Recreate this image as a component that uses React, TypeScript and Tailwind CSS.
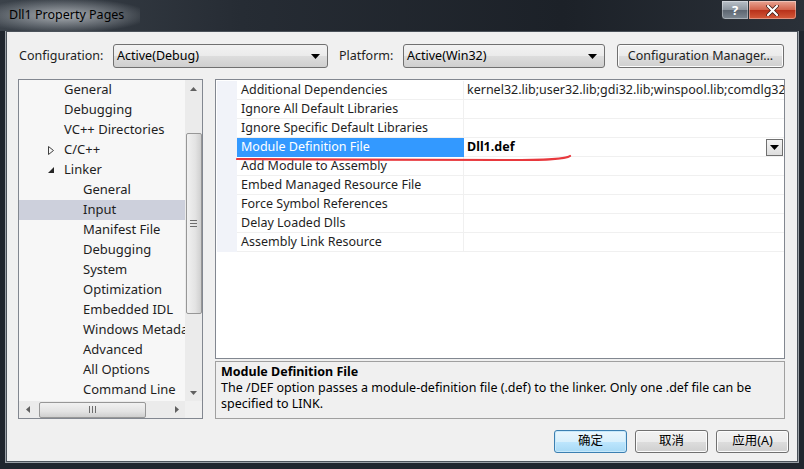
import React from 'react';

type TreeItem = { label: string; level: 1 | 2; expander?: 'open' | 'closed'; selected?: boolean };

const treeItems: TreeItem[] = [
  { label: 'General', level: 1 },
  { label: 'Debugging', level: 1 },
  { label: 'VC++ Directories', level: 1 },
  { label: 'C/C++', level: 1, expander: 'closed' },
  { label: 'Linker', level: 1, expander: 'open' },
  { label: 'General', level: 2 },
  { label: 'Input', level: 2, selected: true },
  { label: 'Manifest File', level: 2 },
  { label: 'Debugging', level: 2 },
  { label: 'System', level: 2 },
  { label: 'Optimization', level: 2 },
  { label: 'Embedded IDL', level: 2 },
  { label: 'Windows Metadata', level: 2 },
  { label: 'Advanced', level: 2 },
  { label: 'All Options', level: 2 },
  { label: 'Command Line', level: 2 },
];

const props: [string, string][] = [
  ['Additional Dependencies', 'kernel32.lib;user32.lib;gdi32.lib;winspool.lib;comdlg32.lib;advapi32.lib;shell32.lib'],
  ['Ignore All Default Libraries', ''],
  ['Ignore Specific Default Libraries', ''],
  ['Module Definition File', 'Dll1.def'],
  ['Add Module to Assembly', ''],
  ['Embed Managed Resource File', ''],
  ['Force Symbol References', ''],
  ['Delay Loaded Dlls', ''],
  ['Assembly Link Resource', ''],
];

function DownArrow() {
  return (
    <svg width="9" height="5" viewBox="0 0 9 5">
      <path d="M0 0 H9 L4.5 5 Z" fill="#000" />
    </svg>
  );
}

function Combo({ value, width }: { value: string; width: string }) {
  return (
    <div
      className={`${width} h-[24px] flex items-center justify-between pl-[3px] pr-[7px] rounded-[3px] border border-[#707070] bg-[linear-gradient(#f2f2f2,#ebebeb_50%,#dddddd_51%,#cfcfcf)] text-black`}
    >
      <span>{value}</span>
      <DownArrow />
    </div>
  );
}

function ScrollArrow({ dir }: { dir: 'up' | 'down' | 'left' | 'right' }) {
  const d = {
    up: 'M0 4 L3.5 0 L7 4 Z',
    down: 'M0 0 H7 L3.5 4 Z',
    left: 'M4 0 V7 L0 3.5 Z',
    right: 'M0 0 V7 L4 3.5 Z',
  }[dir];
  const vertical = dir === 'up' || dir === 'down';
  return (
    <svg width={vertical ? 7 : 4} height={vertical ? 4 : 7} viewBox={vertical ? '0 0 7 4' : '0 0 4 7'}>
      <path d={d} fill="#606060" />
    </svg>
  );
}

function Tree() {
  return (
    <div className="w-[185px] h-[340px] border border-[#828790] bg-[#f7f7f7] flex flex-col">
      <div className="flex h-[321px]">
        <div className="flex-1 overflow-hidden">
          {treeItems.map((item, i) => (
            <div
              key={i}
              className={`h-[20px] flex items-center whitespace-nowrap text-[13px] text-[#1e1e1e] ${
                item.selected ? 'bg-[#cdd0dc]' : ''
              } ${item.level === 1 ? 'pl-[29px]' : 'pl-[64px]'}`}
            >
              {item.level === 1 && (
                <span className="w-[10px] mr-[6px] flex items-center">
                  {item.expander === 'closed' && (
                    <svg width="6" height="9" viewBox="0 0 6 9">
                      <path d="M0.5 0.5 L5.5 4.5 L0.5 8.5 Z" fill="none" stroke="#404040" strokeWidth="1" />
                    </svg>
                  )}
                  {item.expander === 'open' && (
                    <svg width="6" height="6" viewBox="0 0 6 6">
                      <path d="M6 0 V6 H0 Z" fill="#262626" />
                    </svg>
                  )}
                </span>
              )}
              <span>{item.label}</span>
            </div>
          ))}
        </div>
        <div className="w-[17px] bg-[#ebebeb] flex flex-col items-center">
          <div className="h-[17px] flex items-center justify-center">
            <ScrollArrow dir="up" />
          </div>
          <div className="mt-[36px] w-[16px] h-[181px] rounded-[2px] border border-[#979797] bg-[linear-gradient(90deg,#f1f1f1,#e3e3e3_60%,#cfcfcf)] flex flex-col items-center justify-center gap-[2px]">
            <div className="w-[7px] h-[1px] bg-[#6d6d6d]" />
            <div className="w-[7px] h-[1px] bg-[#6d6d6d]" />
            <div className="w-[7px] h-[1px] bg-[#6d6d6d]" />
          </div>
          <div className="flex-1" />
          <div className="h-[17px] flex items-center justify-center">
            <ScrollArrow dir="down" />
          </div>
        </div>
      </div>
      <div className="flex h-[17px]">
        <div className="flex-1 bg-[#ebebeb] flex items-center">
          <div className="w-[17px] flex justify-center">
            <ScrollArrow dir="left" />
          </div>
          <div className="ml-[3px] w-[107px] h-[16px] rounded-[2px] border border-[#979797] bg-[linear-gradient(#f1f1f1,#e3e3e3_60%,#cfcfcf)] flex items-center justify-center gap-[2px]">
            <div className="w-[1px] h-[7px] bg-[#6d6d6d]" />
            <div className="w-[1px] h-[7px] bg-[#6d6d6d]" />
            <div className="w-[1px] h-[7px] bg-[#6d6d6d]" />
          </div>
          <div className="flex-1" />
          <div className="w-[17px] flex justify-center">
            <ScrollArrow dir="right" />
          </div>
        </div>
        <div className="w-[17px] bg-[#f0f0f0]" />
      </div>
    </div>
  );
}

function PropertyGrid() {
  return (
    <div className="relative w-[570px] h-[280px] border border-[#828790] bg-white pl-[1px] pt-[1px]">
      {props.map(([name, value], i) => {
        const selected = i === 3;
        return (
          <div key={i} className="flex h-[19px] text-[12.5px]">
            <div className="w-[20px] bg-[#f1f3f9]" />
            <div
              className={`w-[227px] flex items-center pl-[4px] border-b border-r whitespace-nowrap ${
                selected ? 'bg-[#3399ff] text-white border-[#3399ff]' : 'text-[#1e1e1e] border-[#f0f0f0]'
              }`}
            >
              {name}
            </div>
            <div className="flex-1 flex items-center pl-[3px] border-b border-[#f0f0f0] overflow-hidden whitespace-nowrap text-[#1e1e1e]">
              {selected ? (
                <>
                  <span className="flex-1 font-bold text-black">{value}</span>
                  <span className="w-[17px] h-[17px] mr-[1px] border border-[#707070] bg-[linear-gradient(#f4f4f4,#dedede)] flex items-center justify-center">
                    <DownArrow />
                  </span>
                </>
              ) : (
                value
              )}
            </div>
          </div>
        );
      })}
      <svg className="absolute left-[20px] top-[74px]" width="336" height="10" viewBox="0 0 336 10">
        <path
          d="M1 5 C80 5.5 200 6 268 6 C306 6 330 5.5 334 2"
          fill="none"
          stroke="#e8383d"
          strokeWidth="2.2"
          strokeLinecap="round"
        />
      </svg>
    </div>
  );
}

function DialogButton({ label, primary, width }: { label: string; primary?: boolean; width: string }) {
  return (
    <div
      className={`${width} h-[23px] flex items-center justify-center rounded-[3px] border text-black ${
        primary
          ? 'border-[#3c7fb1] bg-[linear-gradient(#eaf6fd,#d9f0fc_50%,#bee6fd_51%,#a7d9f5)] shadow-[inset_0_0_0_1px_#c8e9fb]'
          : 'border-[#707070] bg-[linear-gradient(#f2f2f2,#ebebeb_50%,#dddddd_51%,#cfcfcf)] shadow-[inset_0_0_0_1px_#fcfcfc]'
      }`}
    >
      {label}
    </div>
  );
}

export default function App() {
  return (
    <div className="w-[804px] h-[469px] overflow-hidden bg-[#20262e] font-['Noto_Sans','Noto_Sans_CJK_SC',sans-serif] flex flex-col">
      <div className="relative h-[31px] shrink-0 bg-[linear-gradient(90deg,#3b424a,#262c34_30%,#1c2128_70%,#2a3038)]">
        <div className="absolute left-0 top-0 w-[140px] h-[31px] bg-[radial-gradient(ellipse_at_45%_50%,rgba(200,204,208,0.8),rgba(150,156,162,0.45)_50%,rgba(60,66,74,0)_80%)]" />
        <div className="relative pl-[9px] pt-[6px] text-[12.5px] text-black">Dll1 Property Pages</div>
        <div className="absolute right-[7px] top-0 flex">
          <div className="w-[28px] h-[20px] rounded-bl-[4px] border border-[#2a2f36] bg-[linear-gradient(#b9c0c8,#8c959f_50%,#5d6671_51%,#7e8892)] flex items-center justify-center text-white font-bold text-[13px] leading-none shadow-[inset_0_0_0_1px_rgba(255,255,255,0.35)]">
            ?
          </div>
          <div className="w-[48px] h-[20px] rounded-br-[4px] border border-[#2a2f36] border-l-0 bg-[linear-gradient(#e8a493,#d2624a_50%,#b8311a_51%,#d45a3a)] flex items-center justify-center shadow-[inset_0_0_0_1px_rgba(255,255,255,0.35)]">
            <svg width="13" height="11" viewBox="0 0 13 11">
              <path d="M2 1 L11 10 M11 1 L2 10" stroke="#3a1a14" strokeWidth="3.6" strokeLinecap="round" />
              <path d="M2 1 L11 10 M11 1 L2 10" stroke="#fff" strokeWidth="2.2" strokeLinecap="round" />
            </svg>
          </div>
        </div>
      </div>
      <div className="flex-1 px-[6px] pb-[7px]">
        <div className="h-[431px] border border-[#4b525a] shadow-[0_0_0_1px_#9aa0a6]">
          <div className="h-full bg-[#f0f0f0] flex flex-col text-[12.5px] text-[#1e1e1e]">
            <div className="mt-[12px] flex items-center pl-[11px]">
              <span className="w-[95px] pl-[1px]">Configuration:</span>
              <Combo value="Active(Debug)" width="w-[215px]" />
              <span className="ml-[11px] w-[64px]">Platform:</span>
              <Combo value="Active(Win32)" width="w-[202px]" />
              <div className="ml-[12px] w-[167px] h-[24px] flex items-center justify-center rounded-[3px] border border-[#707070] bg-[linear-gradient(#f2f2f2,#ebebeb_50%,#dddddd_51%,#cfcfcf)] shadow-[inset_0_0_0_1px_#fcfcfc]">
                Configuration Manager...
              </div>
            </div>
            <div className="mt-[11px] flex pl-[11px]">
              <Tree />
              <div className="ml-[12px] flex flex-col">
                <PropertyGrid />
                <div className="mt-[2px] w-[570px] h-[58px] border border-[#a0a0a0] bg-[#f0f0f0] px-[5px] pt-[2px] leading-[16px] text-black">
                  <div className="font-bold">Module Definition File</div>
                  <div>
                    The /DEF option passes a module-definition file (.def) to the linker. Only one .def file can be
                    specified to LINK.
                  </div>
                </div>
              </div>
            </div>
            <div className="mt-[11px] flex justify-end gap-[8px] pr-[8px]">
              <DialogButton label="确定" primary width="w-[73px]" />
              <DialogButton label="取消" width="w-[73px]" />
              <DialogButton label="应用(A)" width="w-[73px]" />
            </div>
          </div>
        </div>
      </div>
    </div>
  );
}
